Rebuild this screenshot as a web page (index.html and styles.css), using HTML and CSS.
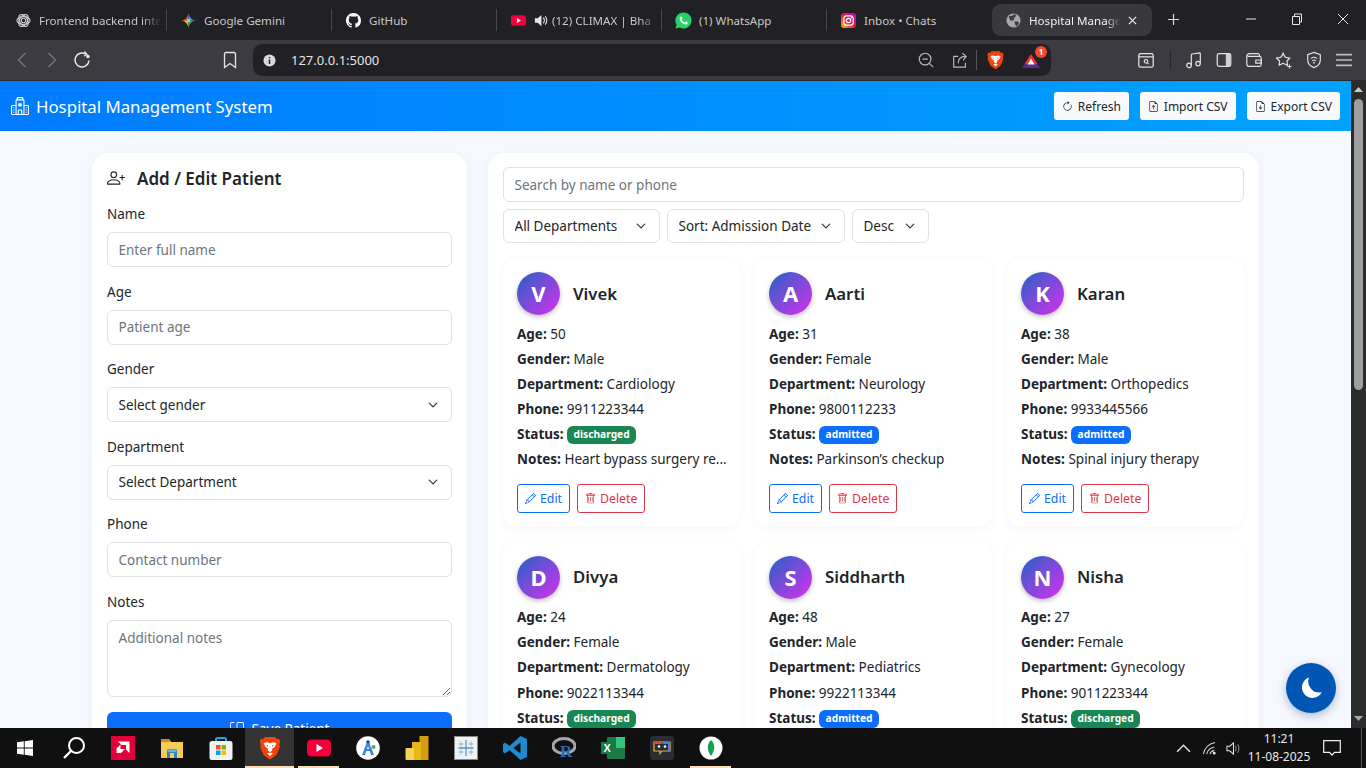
FILE: index.html
```html
<!DOCTYPE html>
<html lang="en">
<head>
<meta charset="utf-8">
<title>Hospital Management System</title>
<link rel="stylesheet" href="styles.css">
</head>
<body>
<svg class="defs" width="0" height="0" aria-hidden="true">
  <symbol id="i-pencil" viewBox="0 0 16 16"><path d="M12.146.146a.5.5 0 0 1 .708 0l3 3a.5.5 0 0 1 0 .708l-10 10a.5.5 0 0 1-.168.11l-5 2a.5.5 0 0 1-.65-.65l2-5a.5.5 0 0 1 .11-.168zM11.207 2.5 13.5 4.793 14.793 3.5 12.5 1.207zm1.586 3L10.5 3.207 4 9.707V10h.5a.5.5 0 0 1 .5.5v.5h.5a.5.5 0 0 1 .5.5v.5h.293zm-9.761 5.175-.106.106-1.528 3.821 3.821-1.528.106-.106A.5.5 0 0 1 5 12.5V12h-.5a.5.5 0 0 1-.5-.5V11h-.5a.5.5 0 0 1-.468-.325"/></symbol>
  <symbol id="i-trash" viewBox="0 0 16 16"><path d="M5.5 5.5A.5.5 0 0 1 6 6v6a.5.5 0 0 1-1 0V6a.5.5 0 0 1 .5-.5m2.5 0a.5.5 0 0 1 .5.5v6a.5.5 0 0 1-1 0V6a.5.5 0 0 1 .5-.5m3 .5a.5.5 0 0 0-1 0v6a.5.5 0 0 0 1 0z"/><path d="M14.5 3a1 1 0 0 1-1 1H13v9a2 2 0 0 1-2 2H5a2 2 0 0 1-2-2V4h-.5a1 1 0 0 1-1-1V2a1 1 0 0 1 1-1H6a1 1 0 0 1 1-1h2a1 1 0 0 1 1 1h3.5a1 1 0 0 1 1 1zM4.118 4 4 4.059V13a1 1 0 0 0 1 1h6a1 1 0 0 0 1-1V4.059L11.882 4zM2.5 3h11V2h-11z"/></symbol>
  <symbol id="i-person-plus" viewBox="0 0 16 16"><path d="M6 8a3 3 0 1 0 0-6 3 3 0 0 0 0 6m2-3a2 2 0 1 1-4 0 2 2 0 0 1 4 0m4 8c0 1-1 1-1 1H1s-1 0-1-1 1-4 6-4 6 3 6 4m-1-.004c-.001-.246-.154-.986-.832-1.664C9.516 10.68 8.289 10 6 10s-3.516.68-4.168 1.332c-.678.678-.83 1.418-.832 1.664z"/><path d="M13.5 5a.5.5 0 0 1 .5.5V7h1.5a.5.5 0 0 1 0 1H14v1.5a.5.5 0 0 1-1 0V8h-1.5a.5.5 0 0 1 0-1H13V5.5a.5.5 0 0 1 .5-.5"/></symbol>
  <symbol id="i-refresh" viewBox="0 0 16 16"><path d="M8 3a5 5 0 1 0 4.546 2.914.5.5 0 0 1 .908-.417A6 6 0 1 1 8 2z"/><path d="M8 4.466V.534a.25.25 0 0 1 .41-.192l2.36 1.966c.12.1.12.284 0 .384L8.41 4.658A.25.25 0 0 1 8 4.466"/></symbol>
  <symbol id="i-file-up" viewBox="0 0 16 16"><path d="M8.5 11.5a.5.5 0 0 1-1 0V7.707L6.354 8.854a.5.5 0 1 1-.708-.708l2-2a.5.5 0 0 1 .708 0l2 2a.5.5 0 0 1-.708.708L8.5 7.707z"/><path d="M14 14V4.5L9.5 0H4a2 2 0 0 0-2 2v12a2 2 0 0 0 2 2h8a2 2 0 0 0 2-2M9.5 3A1.5 1.5 0 0 0 11 4.5h2V14a1 1 0 0 1-1 1H4a1 1 0 0 1-1-1V2a1 1 0 0 1 1-1h5.5z"/></symbol>
  <symbol id="i-file-down" viewBox="0 0 16 16"><path d="M8.5 6.5a.5.5 0 0 0-1 0v3.793L6.354 9.146a.5.5 0 1 0-.708.708l2 2a.5.5 0 0 0 .708 0l2-2a.5.5 0 0 0-.708-.708L8.5 10.293z"/><path d="M14 14V4.5L9.5 0H4a2 2 0 0 0-2 2v12a2 2 0 0 0 2 2h8a2 2 0 0 0 2-2M9.5 3A1.5 1.5 0 0 0 11 4.5h2V14a1 1 0 0 1-1 1H4a1 1 0 0 1-1-1V2a1 1 0 0 1 1-1h5.5z"/></symbol>
  <symbol id="i-hospital" viewBox="0 0 16 16"><path d="M8.5 5.034v1.1l.953-.55.5.867L9 7l.953.55-.5.866-.953-.55v1.1h-1v-1.1l-.953.55-.5-.866L7 7l-.953-.55.5-.866.953.55v-1.1zM13.25 9a.25.25 0 0 0-.25.25v.5c0 .138.112.25.25.25h.5a.25.25 0 0 0 .25-.25v-.5a.25.25 0 0 0-.25-.25zM13 11.25a.25.25 0 0 1 .25-.25h.5a.25.25 0 0 1 .25.25v.5a.25.25 0 0 1-.25.25h-.5a.25.25 0 0 1-.25-.25zm.25 1.75a.25.25 0 0 0-.25.25v.5c0 .138.112.25.25.25h.5a.25.25 0 0 0 .25-.25v-.5a.25.25 0 0 0-.25-.25zm-11-4a.25.25 0 0 0-.25.25v.5c0 .138.112.25.25.25h.5A.25.25 0 0 0 3 9.75v-.5A.25.25 0 0 0 2.75 9zm0 2a.25.25 0 0 0-.25.25v.5c0 .138.112.25.25.25h.5a.25.25 0 0 0 .25-.25v-.5a.25.25 0 0 0-.25-.25zM2 13.25a.25.25 0 0 1 .25-.25h.5a.25.25 0 0 1 .25.25v.5a.25.25 0 0 1-.25.25h-.5a.25.25 0 0 1-.25-.25z"/><path d="M5 1a1 1 0 0 1 1-1h4a1 1 0 0 1 1 1v1a1 1 0 0 1 1 1v4h3a1 1 0 0 1 1 1v7a1 1 0 0 1-1 1H1a1 1 0 0 1-1-1V8a1 1 0 0 1 1-1h3V3a1 1 0 0 1 1-1zm2 14h2v-3H7zm3 0h1V3H5v12h1v-3a1 1 0 0 1 1-1h2a1 1 0 0 1 1 1zm0-14H6v1h4zm2 7v7h3V8zm-8 7V8H1v7z"/></symbol>
  <symbol id="i-save" viewBox="0 0 16 16"><path d="M2 1a1 1 0 0 0-1 1v12a1 1 0 0 0 1 1h12a1 1 0 0 0 1-1V2a1 1 0 0 0-1-1H9.5a1 1 0 0 0-1 1v7.293l2.646-2.647a.5.5 0 0 1 .708.708l-3.5 3.5a.5.5 0 0 1-.708 0l-3.5-3.5a.5.5 0 1 1 .708-.708L7.5 9.293V2a2 2 0 0 1 2-2H14a2 2 0 0 1 2 2v12a2 2 0 0 1-2 2H2a2 2 0 0 1-2-2V2a2 2 0 0 1 2-2h2.5a.5.5 0 0 1 0 1z"/></symbol>
  <symbol id="i-yt" viewBox="0 0 24 24"><rect x="0" y="3.500" width="24" height="17" rx="4.500" fill="#f2003c"/><path d="M9.500 8v8l6.500-4z" fill="#fff"/></symbol>
  <symbol id="i-brave" viewBox="0 0 16 18"><path d="M4.200 .8h7.600l1.400 1.500 1.600-.3.800 2.200-.6 2.300.4 1.500L13 14l-4.200 3.300q-.8.600-1.600 0L3 14 .6 8l.4-1.500L.4 4.200 1.200 2l1.600.3z" fill="#f1440d"/><path d="M3.200 5.300 6 4.700l2 .8 2-.8 2.800.6-1.200 2.800-2 1.400v1.600L8 12l-1.600-1.100V9.300l-2-1.400zM5.800 12.800 8 12.500l2.200.3L8 15.200z" fill="#fff"/><path d="M5 6.600l1.500.4-.4 1zM11 6.600l-1.500.4.400 1z" fill="#f1440d"/></symbol>
</svg>

<div class="tabbar">
  <div class="tab">
    <svg class="tab-ico" viewBox="0 0 16 16"><g fill="none" stroke="#cfcfcf" stroke-width="1.200"><circle cx="8" cy="8" r="2.400"/><ellipse cx="8" cy="8" rx="7" ry="4.200"/><ellipse cx="8" cy="8" rx="7" ry="4.200" transform="rotate(60 8 8)"/><ellipse cx="8" cy="8" rx="7" ry="4.200" transform="rotate(120 8 8)"/></g></svg>
    <span class="tab-title fade">Frontend backend inte</span>
  </div>
  <div class="tab">
    <svg class="tab-ico" viewBox="0 0 16 16"><path d="M8 0C7.400 4.400 4.500 7.400 0 8h8z" fill="#e8453c"/><path d="M8 0c.6 4.400 3.500 7.400 8 8H8z" fill="#4a8df6"/><path d="M0 8c4.500.6 7.400 3.600 8 8V8z" fill="#f5b30a"/><path d="M16 8c-4.500.6-7.400 3.600-8 8V8z" fill="#2fa866"/><circle cx="8" cy="8" r="1.800" fill="#9bc7f5"/></svg>
    <span class="tab-title">Google Gemini</span>
  </div>
  <div class="tab">
    <svg class="tab-ico" viewBox="0 0 16 16"><path fill="#fff" d="M8 0C3.580 0 0 3.580 0 8c0 3.540 2.290 6.530 5.470 7.590.4.070.55-.17.55-.38 0-.19-.01-.82-.01-1.490-2.010.370-2.530-.490-2.690-.940-.090-.230-.480-.940-.820-1.130-.280-.150-.680-.520-.010-.530.630-.010 1.080.580 1.230.820.720 1.210 1.870.870 2.330.660.070-.520.280-.870.510-1.070-1.780-.200-3.640-.890-3.640-3.950 0-.870.310-1.590.820-2.150-.080-.200-.360-1.020.080-2.120 0 0 .670-.210 2.200.820.640-.180 1.320-.270 2-.270s1.360.090 2 .270c1.530-1.040 2.200-.820 2.200-.820.440 1.100.160 1.920.080 2.120.510.560.820 1.270.820 2.150 0 3.070-1.870 3.750-3.650 3.950.290.250.540.730.540 1.480 0 1.070-.010 1.930-.010 2.200 0 .210.150.460.550.380A8.010 8.010 0 0 0 16 8c0-4.420-3.580-8-8-8z"/></svg>
    <span class="tab-title">GitHub</span>
  </div>
  <div class="tab">
    <svg class="tab-ico" viewBox="0 0 24 24"><use href="#i-yt"/></svg>
    <svg class="tab-audio" viewBox="0 0 16 16"><path d="M2 5.500h3L9 2v12L5 10.500H2z" fill="#e6e6e6"/><path d="M11 5c1.300 1.700 1.300 4.300 0 6M13 3.500c2 2.600 2 6.400 0 9" fill="none" stroke="#e6e6e6" stroke-width="1.200"/></svg>
    <span class="tab-title fade">(12) CLIMAX | Bha</span>
  </div>
  <div class="tab">
    <svg class="tab-ico tab-ico-lg" viewBox="0 0 16 16"><path d="M8 .4A7.600 7.600 0 0 0 1.500 12L.4 15.600l3.800-1A7.600 7.600 0 1 0 8 .4z" fill="#25d366"/><path d="M5.400 4.300c-.5.300-1.100 1-1 2 .2 2.500 3 5.200 5.400 5.500 1.100.1 1.900-.5 2.200-1.200l.1-.8-2-1-.8 1C7.900 9.400 6.700 8.100 6.200 7l.8-.9-.8-1.900z" fill="#fff"/></svg>
    <span class="tab-title">(1) WhatsApp</span>
  </div>
  <div class="tab tab-last">
    <svg class="tab-ico" viewBox="0 0 16 16"><defs><linearGradient id="ig" x1="0" y1="1" x2="1" y2="0"><stop offset="0" stop-color="#fdc100"/><stop offset=".5" stop-color="#f0114c"/><stop offset="1" stop-color="#a112cf"/></linearGradient></defs><rect width="16" height="16" rx="3.500" fill="url(#ig)"/><rect x="3" y="3" width="10" height="10" rx="3" fill="none" stroke="#fff" stroke-width="1.300"/><circle cx="8" cy="8" r="2.300" fill="none" stroke="#fff" stroke-width="1.300"/><circle cx="11" cy="5" r=".7" fill="#fff"/></svg>
    <span class="tab-title">Inbox • Chats</span>
  </div>
  <div class="tab tab-active">
    <svg class="tab-ico" viewBox="0 0 16 16"><circle cx="8" cy="8" r="7.500" fill="#a6a7ab"/><path d="M3 3.500 7 3l2-2 2 2-2 2-1 3-3 0-1-1zM9 9l3 0 2 1-2 4-2-1z" fill="#3a3a3f"/></svg>
    <span class="tab-title fade">Hospital Manage</span>
    <svg class="tab-close" viewBox="0 0 10 10"><path d="M1 1l8 8M9 1l-8 8" stroke="#e8e8e8" stroke-width="1.400"/></svg>
  </div>
  <svg class="tab-new" viewBox="0 0 12 12"><path d="M6 0v12M0 6h12" stroke="#dcdcdc" stroke-width="1.300"/></svg>
  <div class="win-ctrls">
    <svg class="win-ctrl" viewBox="0 0 46 12"><path d="M18 6h10" stroke="#e8e8e8"/></svg>
    <svg class="win-ctrl" viewBox="0 0 46 12"><path d="M18.500 3.500h7v8h-7zM20.500 3.500v-2.500h7v8h-2" fill="none" stroke="#e8e8e8"/></svg>
    <svg class="win-ctrl" viewBox="0 0 46 12"><path d="M18 1l10 10M28 1l-10 10" stroke="#e8e8e8"/></svg>
  </div>
</div>

<div class="toolbar">
  <svg class="tb-ico" viewBox="0 0 20 20"><path d="M13.500 3l-7 7 7 7" fill="none" stroke="#77777c" stroke-width="1.300"/></svg>
  <svg class="tb-ico" viewBox="0 0 20 20"><path d="M6.500 3l7 7-7 7" fill="none" stroke="#77777c" stroke-width="1.300"/></svg>
  <svg class="tb-ico" viewBox="0 0 20 20"><path d="M17 10.500a7 7 0 1 1-3-6.300" fill="none" stroke="#ececec" stroke-width="1.500"/><circle cx="16" cy="6.500" r="1.700" fill="#ececec"/><path d="M12.500 1.500l2.500 3-3 1.500" fill="none" stroke="#ececec" stroke-width="1.200"/></svg>
  <svg class="tb-ico tb-bookmark" viewBox="0 0 20 20"><path d="M4.500 4a1.500 1.500 0 0 1 1.500-1.500h8A1.500 1.500 0 0 1 15.500 4v13.500L10 13.500l-5.500 4z" fill="none" stroke="#e6e6e6" stroke-width="1.300"/></svg>
  <div class="omnibox">
    <svg class="omni-info" viewBox="0 0 14 14"><circle cx="7" cy="7" r="6.500" fill="#d8d8d8"/><path d="M7 3.200v1.400M7 6v4.800" stroke="#202025" stroke-width="1.600"/></svg>
    <span class="omni-url">127.0.0.1:5000</span>
    <svg class="omni-ico" viewBox="0 0 20 20"><circle cx="9" cy="9" r="6.500" fill="none" stroke="#b8b8bc" stroke-width="1.300"/><path d="M6 9h6M14 14l4 4" stroke="#b8b8bc" stroke-width="1.300"/></svg>
    <svg class="omni-ico" viewBox="0 0 20 20"><path d="M8 6H3v12h13v-5M8 14c0-5 3-8 8-8M12.500 2.500 17 6l-3.500 4.500" fill="none" stroke="#b8b8bc" stroke-width="1.300"/></svg>
    <span class="omni-sep"></span>
    <svg class="omni-brave" viewBox="0 0 16 18"><use href="#i-brave"/></svg>
    <div class="omni-rewards">
      <svg class="omni-tri" viewBox="0 0 18 14"><path d="M9 0l9 14H0z" fill="#5d2a8e"/><path d="M9 0l6.500 10h-13z" fill="#f1331f"/><path d="M9 4.500l3.500 6h-7z" fill="#fff"/></svg>
      <span class="omni-badge">1</span>
    </div>
  </div>
  <div class="tb-right">
    <svg class="tb-ico" viewBox="0 0 20 20"><rect x="2" y="3" width="16" height="15" rx="2" fill="none" stroke="#e2e2e2" stroke-width="1.400"/><path d="M2 6.500h16" stroke="#e2e2e2" stroke-width="1.400"/><circle cx="10" cy="11.500" r="2" fill="none" stroke="#e2e2e2" stroke-width="1.300"/><path d="M11.500 13l1.500 1.500" stroke="#e2e2e2" stroke-width="1.300"/></svg>
    <span class="tb-sep"></span>
    <svg class="tb-ico" viewBox="0 0 20 20"><circle cx="4.500" cy="16" r="2.500" fill="none" stroke="#e2e2e2" stroke-width="1.300"/><circle cx="14.500" cy="14" r="2.500" fill="none" stroke="#e2e2e2" stroke-width="1.300"/><path d="M7 16V4.500q0-1 1-1.200l8-1.300q1 0 1 1v11" fill="none" stroke="#e2e2e2" stroke-width="1.300"/></svg>
    <svg class="tb-ico" viewBox="0 0 20 20"><rect x="2.500" y="3" width="15" height="14" rx="2" fill="none" stroke="#e2e2e2" stroke-width="1.400"/><path d="M12 3h5.500v14H12z" fill="#d0d0d0"/></svg>
    <svg class="tb-ico" viewBox="0 0 20 20"><path d="M16 6V4.500a1.500 1.500 0 0 0-1.500-1.500H5a3 3 0 0 0-3 3v8.500A2.500 2.500 0 0 0 4.500 17H16a2 2 0 0 0 2-2V8a2 2 0 0 0-2-2H3" fill="none" stroke="#e2e2e2" stroke-width="1.300"/><path d="M12 10h6v3.500h-6z" fill="none" stroke="#e2e2e2" stroke-width="1.300"/></svg>
    <svg class="tb-ico" viewBox="0 0 20 20"><path d="M9 2c.8 3 1.500 4.200 2.800 5l4.700.8-3.200 3.300.6 4.900-4.900-2.500-4.500 2.300.6-4.700L1.500 7.800 6.300 7C7.500 6 8.300 4.800 9 2z" fill="none" stroke="#e2e2e2" stroke-width="1.300" stroke-linejoin="round"/><path d="M16 15v4.500M13.800 17.200h4.500" stroke="#e2e2e2" stroke-width="1.200"/></svg>
    <svg class="tb-ico" viewBox="0 0 20 20"><path d="M10 1.500l7 2.500v6c0 4-3 7-7 8.500C6 17 3 14 3 10V4z" fill="none" stroke="#e2e2e2" stroke-width="1.300"/><path d="M6.500 8.500c2-1.700 5-1.700 7 0M8 10.800c1.200-1 2.800-1 4 0" fill="none" stroke="#e2e2e2" stroke-width="1.200"/><circle cx="10" cy="13" r="1" fill="#e2e2e2"/></svg>
    <svg class="tb-ico" viewBox="0 0 20 20"><path d="M1 4h18M1 10h18M1 16h18" stroke="#bdbdbd" stroke-width="1.800"/></svg>
  </div>
</div>

<div class="window">
  <div class="page">
    <header class="app-header">
      <div class="brand">
        <svg class="brand-ico" viewBox="0 0 16 16"><use href="#i-hospital"/></svg>
        <span>Hospital Management System</span>
      </div>
      <div class="header-actions">
        <button class="hbtn"><svg class="ico" viewBox="0 0 16 16"><use href="#i-refresh"/></svg>Refresh</button>
        <button class="hbtn"><svg class="ico" viewBox="0 0 16 16"><use href="#i-file-up"/></svg>Import CSV</button>
        <button class="hbtn"><svg class="ico" viewBox="0 0 16 16"><use href="#i-file-down"/></svg>Export CSV</button>
      </div>
    </header>
    <main class="content">
      <section class="panel form-panel">
        <h2 class="panel-title"><svg class="title-ico" viewBox="0 0 16 16"><use href="#i-person-plus"/></svg>Add / Edit Patient</h2>
        <label class="field-label">Name</label>
        <input class="control" placeholder="Enter full name">
        <label class="field-label">Age</label>
        <input class="control" placeholder="Patient age">
        <label class="field-label">Gender</label>
        <select class="control select"><option>Select gender</option></select>
        <label class="field-label">Department</label>
        <select class="control select"><option>Select Department</option></select>
        <label class="field-label">Phone</label>
        <input class="control" placeholder="Contact number">
        <label class="field-label">Notes</label>
        <textarea class="control notes" placeholder="Additional notes"></textarea>
        <button class="save-btn"><svg class="ico" viewBox="0 0 16 16"><use href="#i-save"/></svg>Save Patient</button>
      </section>
      <section class="panel list-panel">
        <input class="control search" placeholder="Search by name or phone">
        <div class="filters">
          <select class="control select filter f-dept"><option>All Departments</option></select>
          <select class="control select filter f-sort"><option>Sort: Admission Date</option></select>
          <select class="control select filter f-dir"><option>Desc</option></select>
        </div>
        <div class="cards">
          <article class="card">
            <div class="card-head"><span class="avatar">V</span><span class="pname">Vivek</span></div>
            <p class="row"><b>Age:</b> 50</p>
            <p class="row"><b>Gender:</b> Male</p>
            <p class="row"><b>Department:</b> Cardiology</p>
            <p class="row"><b>Phone:</b> 9911223344</p>
            <p class="row"><b>Status:</b> <span class="badge done">discharged</span></p>
            <p class="row"><b>Notes:</b> Heart bypass surgery re...</p>
            <div class="actions"><button class="sbtn edit"><svg class="ico" viewBox="0 0 16 16"><use href="#i-pencil"/></svg>Edit</button><button class="sbtn del"><svg class="ico" viewBox="0 0 16 16"><use href="#i-trash"/></svg>Delete</button></div>
          </article>
          <article class="card">
            <div class="card-head"><span class="avatar">A</span><span class="pname">Aarti</span></div>
            <p class="row"><b>Age:</b> 31</p>
            <p class="row"><b>Gender:</b> Female</p>
            <p class="row"><b>Department:</b> Neurology</p>
            <p class="row"><b>Phone:</b> 9800112233</p>
            <p class="row"><b>Status:</b> <span class="badge adm">admitted</span></p>
            <p class="row"><b>Notes:</b> Parkinson’s checkup</p>
            <div class="actions"><button class="sbtn edit"><svg class="ico" viewBox="0 0 16 16"><use href="#i-pencil"/></svg>Edit</button><button class="sbtn del"><svg class="ico" viewBox="0 0 16 16"><use href="#i-trash"/></svg>Delete</button></div>
          </article>
          <article class="card">
            <div class="card-head"><span class="avatar">K</span><span class="pname">Karan</span></div>
            <p class="row"><b>Age:</b> 38</p>
            <p class="row"><b>Gender:</b> Male</p>
            <p class="row"><b>Department:</b> Orthopedics</p>
            <p class="row"><b>Phone:</b> 9933445566</p>
            <p class="row"><b>Status:</b> <span class="badge adm">admitted</span></p>
            <p class="row"><b>Notes:</b> Spinal injury therapy</p>
            <div class="actions"><button class="sbtn edit"><svg class="ico" viewBox="0 0 16 16"><use href="#i-pencil"/></svg>Edit</button><button class="sbtn del"><svg class="ico" viewBox="0 0 16 16"><use href="#i-trash"/></svg>Delete</button></div>
          </article>
          <article class="card">
            <div class="card-head"><span class="avatar">D</span><span class="pname">Divya</span></div>
            <p class="row"><b>Age:</b> 24</p>
            <p class="row"><b>Gender:</b> Female</p>
            <p class="row"><b>Department:</b> Dermatology</p>
            <p class="row"><b>Phone:</b> 9022113344</p>
            <p class="row"><b>Status:</b> <span class="badge done">discharged</span></p>
          </article>
          <article class="card">
            <div class="card-head"><span class="avatar">S</span><span class="pname">Siddharth</span></div>
            <p class="row"><b>Age:</b> 48</p>
            <p class="row"><b>Gender:</b> Male</p>
            <p class="row"><b>Department:</b> Pediatrics</p>
            <p class="row"><b>Phone:</b> 9922113344</p>
            <p class="row"><b>Status:</b> <span class="badge adm">admitted</span></p>
          </article>
          <article class="card">
            <div class="card-head"><span class="avatar">N</span><span class="pname">Nisha</span></div>
            <p class="row"><b>Age:</b> 27</p>
            <p class="row"><b>Gender:</b> Female</p>
            <p class="row"><b>Department:</b> Gynecology</p>
            <p class="row"><b>Phone:</b> 9011223344</p>
            <p class="row"><b>Status:</b> <span class="badge done">discharged</span></p>
          </article>
        </div>
      </section>
    </main>
    <button class="fab" aria-label="Toggle theme"><svg viewBox="0 0 24 24"><path d="M10 1.500a10.500 10.500 0 1 0 12.800 14.700A11 11 0 0 1 10 1.500z" fill="#fff"/></svg></button>
  </div>
  <div class="scrollbar">
    <svg class="sb-arrow" viewBox="0 0 15 15"><path d="M3 10l4.500-5 4.500 5z" fill="#c8c8c8"/></svg>
    <div class="sb-thumb"></div>
    <svg class="sb-arrow sb-down" viewBox="0 0 15 15"><path d="M3 5l4.500 5 4.500-5z" fill="#a8a8a8"/></svg>
  </div>
</div>

<footer class="taskbar">
  <div class="task"><svg class="t-win" viewBox="0 0 16 16"><path d="M0 2.300 6.800 1.300v6.200H0zM7.700 1.200 16 0v7.500H7.700zM0 8.500h6.800v6.200L0 13.700zM7.700 8.500H16V16l-8.300-1.200z" fill="#fff"/></svg></div>
  <div class="task"><svg class="t-lg" viewBox="0 0 24 24"><circle cx="14.500" cy="9.500" r="7.500" fill="none" stroke="#fff" stroke-width="2"/><path d="M9 15l-7 7" stroke="#fff" stroke-width="2.400"/></svg></div>
  <div class="task"><svg class="t-lg" viewBox="0 0 24 24"><rect width="24" height="24" fill="#e4003a"/><path d="M7 5.500h11.500V17L15 13.500V9h-4.500z" fill="#fff"/><path d="M5.500 12.500 9.500 8.500V13H14l-4 4H5.500z" fill="#fff"/></svg></div>
  <div class="task"><svg class="t-lg" viewBox="0 0 24 24"><path d="M1 3h8l2 3h12v16H1z" fill="#f5cc55"/><path d="M1 3h8l2 3H1z" fill="#c98f1d"/><path d="M7 15a2 2 0 0 1 2-2h6a2 2 0 0 1 2 2v7h-3v-5h-4v5H7z" fill="#2f86c9"/><path d="M8 13.500h8v2.500H8z" fill="#63b8e8"/></svg></div>
  <div class="task"><svg class="t-lg" viewBox="0 0 24 24"><path d="M7 6V3.500A1.500 1.500 0 0 1 8.500 2h7A1.500 1.500 0 0 1 17 3.500V6" fill="none" stroke="#1ba8dc" stroke-width="2"/><rect y="5" x=".5" width="23" height="19" rx="2.500" fill="#f2f2f2"/><path d="M7 9h4.500v4.500H7z" fill="#f25022"/><path d="M12.500 9H17v4.500h-4.500z" fill="#7fba00"/><path d="M7 14.500h4.500V19H7z" fill="#00a4ef"/><path d="M12.500 14.500H17V19h-4.500z" fill="#ffb900"/></svg></div>
  <div class="task task-on active"><svg class="t-lg" viewBox="0 0 16 18"><use href="#i-brave"/></svg></div>
  <div class="task task-on"><svg class="t-lg" viewBox="0 0 24 24"><use href="#i-yt"/></svg></div>
  <div class="task"><svg class="t-lg" viewBox="0 0 24 24"><circle cx="12" cy="12" r="11.800" fill="#fff"/><path d="M12 3.500 18 19h-3l-3-9-3 9H6z" fill="#3f82e8"/><path d="M8 13h8v2H8z" fill="#3f82e8"/><circle cx="12" cy="6" r="1.800" fill="#2a4a80"/><circle cx="17.500" cy="11" r="2" fill="#4caf50"/></svg></div>
  <div class="task"><svg class="t-lg" viewBox="0 0 24 24"><rect x="14.500" y="0" width="9" height="24" fill="#d69c10"/><rect x="7" y="6" width="9" height="18" fill="#eab719"/><rect x="0.500" y="12" width="8.500" height="12" rx="1" fill="#f4d454"/></svg></div>
  <div class="task"><svg class="t-lg" viewBox="0 0 24 24"><rect x=".5" y=".5" width="23" height="23" fill="#eef2f4" stroke="#8a8a8a"/><path d="M12 4v16M4.500 12h15" stroke="#5f95c0" stroke-width="1.300"/><path d="M7 5.500v5M4.500 8h5M17 5.500v5M14.500 8h5M7 13.500v5M4.500 16h5M17 13.500v5M14.500 16h5" stroke="#8bb4d0" stroke-width="1"/></svg></div>
  <div class="task"><svg class="t-lg" viewBox="0 0 24 24"><path d="M17.500 0 24 3v18l-6.500 3L6.500 14 2 17.500 0 16V8l2-1.500L6.500 10z" fill="#1f8ad2"/><path d="M17.500 6.500 10.500 12l7 5.500z" fill="#101010"/></svg></div>
  <div class="task"><svg class="t-lg" viewBox="0 0 24 24"><ellipse cx="12" cy="10" rx="11" ry="7.500" fill="none" stroke="#a4a8ae" stroke-width="3"/><text class="r-mark" x="8" y="21">R</text></svg></div>
  <div class="task"><svg class="t-lg" viewBox="0 0 24 24"><rect x="6" y="1" width="18" height="22" rx="1" fill="#1e7a45"/><rect x="15" y="1" width="9" height="11" fill="#33c481"/><rect x="0" y="6" width="12" height="12" fill="#107c41"/><text class="x-mark" x="2.500" y="16">X</text></svg></div>
  <div class="task"><svg class="t-lg" viewBox="0 0 24 24"><rect width="24" height="24" rx="3" fill="#2a2d34"/><path d="M4 6h16v9h-8l-2 2.500V15H4z" fill="none" stroke="#e8b23a" stroke-width="1.200"/><path d="M4 6h8v2H4z" fill="#d64933"/><path d="M13 6h7v9h-2V8h-5z" fill="#3f82e8"/><circle cx="9" cy="10.500" r="1.300" fill="#fff"/><circle cx="15" cy="10.500" r="1.300" fill="#fff"/></svg></div>
  <div class="task task-on"><svg class="t-lg" viewBox="0 0 24 24"><circle cx="12" cy="12" r="11.500" fill="#fff"/><path d="M12 4c4 3.500 4.500 10 0 16-4.500-6-4-12.500 0-16z" fill="#13a04f"/></svg></div>
  <div class="tray">
    <svg class="tray-ico tray-up" viewBox="0 0 14 14"><path d="M1 10l6-6 6 6" fill="none" stroke="#e4e4e4" stroke-width="1.300"/></svg>
    <svg class="tray-ico" viewBox="0 0 16 16"><path d="M1.500 14C2.500 8 7 3 14 1.500M5 14c.8-3.500 3.500-6.500 8-7.500M8.500 14c.5-2 2-3.500 4.500-4" fill="none" stroke="#d0d0d0" stroke-width="1.100"/><circle cx="13" cy="13" r="1.500" fill="#e8e8e8"/></svg>
    <svg class="tray-ico tray-vol" viewBox="0 0 16 16"><path d="M1 5.500h3L8 2v12L4 10.500H1z" fill="none" stroke="#e4e4e4" stroke-width="1.100"/><path d="M10 5c1 1.700 1 4.300 0 6M12.500 3.500c1.700 2.600 1.700 6.400 0 9" fill="none" stroke="#a0a0a0" stroke-width="1"/></svg>
    <div class="clock"><span>11:21</span><span>11-08-2025</span></div>
    <svg class="tray-note" viewBox="0 0 18 16"><path d="M.7.700h16.600v11.600H11.500L9 15l-2.500-2.700H.7z" fill="none" stroke="#f0f0f0" stroke-width="1.200"/></svg>
    <span class="show-desktop"></span>
  </div>
</footer>
</body>
</html>
```
FILE: styles.css
```css
* { box-sizing: border-box; }
html, body { height: 100%; }
body {
  margin: 0;
  width: 1366px;
  height: 768px;
  overflow: hidden;
  display: flex;
  flex-direction: column;
  font-family: "Noto Sans", "Open Sans", sans-serif;
  color: #212529;
  background: #f6f8ff;
}
.defs { position: absolute; }
button, input, select, textarea { font-family: inherit; }

/* browser tabs */
.tabbar {
  height: 40px;
  flex: none;
  display: flex;
  align-items: flex-start;
  padding: 4px 0 0 2px;
  background: #202025;
  color: #c8c8cc;
  font-size: 11.600px;
}
.tab {
  width: 165px;
  height: 32px;
  display: flex;
  align-items: center;
  padding: 0 6px 0 14px;
  position: relative;
}
.tab::after {
  content: "";
  position: absolute;
  right: 0;
  top: 5px;
  bottom: 5px;
  width: 1px;
  background: #47474c;
}
.tab-last::after, .tab-active::after { display: none; }
.tab-ico { width: 15px; height: 15px; flex: none; margin-right: 8px; }
.tab-ico-lg { width: 17px; height: 17px; margin-right: 7px; margin-left: -1px; }
.tab-audio { width: 15px; height: 15px; flex: none; margin: 0 4px 0 -1px; }
.tab-title { white-space: nowrap; }
.fade {
  flex: 1;
  min-width: 0;
  -webkit-mask-image: linear-gradient(90deg, #000 85%, transparent);
  mask-image: linear-gradient(90deg, #000 85%, transparent);
}
.tab-active {
  width: 160px;
  background: #38383d;
  border-radius: 9px;
  color: #f1f1f1;
}
.tab-close { width: 9px; height: 9px; flex: none; margin: 0 9px 0 8px; }
.tab-new { width: 11px; height: 11px; flex: none; margin: 10px 0 0 16px; }
.win-ctrls { margin-left: auto; display: flex; }
.win-ctrl { width: 46px; height: 12px; margin-top: 9px; }

/* browser toolbar */
.toolbar {
  height: 41px;
  flex: none;
  display: flex;
  align-items: center;
  padding: 0 7px;
  background: #3b3b41;
  border-bottom: 1px solid #2b2b30;
}
.tb-ico { width: 20px; height: 20px; flex: none; margin: 0 5px; }
.tb-bookmark { margin-left: 123px; }
.omnibox {
  width: 798px;
  height: 32px;
  flex: none;
  margin-left: 8px;
  display: flex;
  align-items: center;
  padding: 0 10px;
  background: #202025;
  border-radius: 9px;
}
.omni-info { width: 13px; height: 13px; margin-right: 15px; }
.omni-url { flex: 1; color: #e4e4e6; font-size: 13px; }
.omni-ico { width: 18px; height: 18px; margin-left: 16px; }
.omni-sep { width: 1px; height: 20px; margin: 0 10px 0 7px; background: #55555a; }
.omni-brave { width: 17px; height: 20px; }
.omni-rewards { position: relative; width: 18px; margin: 2px 1px 0 18px; display: flex; }
.omni-tri { width: 18px; height: 14px; }
.omni-badge {
  position: absolute;
  top: -8px;
  right: -7px;
  width: 12px;
  height: 12px;
  border-radius: 50%;
  background: #f0492c;
  color: #fff;
  font-size: 8px;
  font-weight: 700;
  line-height: 12px;
  text-align: center;
}
.tb-right { display: flex; align-items: center; margin-left: 80px; }
.tb-right .tb-ico { width: 18px; height: 18px; margin: 0 6px; }
.tb-sep { width: 1px; height: 20px; margin: 0 8px 0 9px; background: #26262a; }

/* page */
.window { flex: 1; min-height: 0; display: flex; overflow: hidden; }
.page { flex: 1; min-width: 0; position: relative; overflow: hidden; background: #f6f8ff; }
.scrollbar {
  width: 15px;
  flex: none;
  display: flex;
  flex-direction: column;
  align-items: center;
  background: #2c2c2c;
}
.sb-arrow { width: 15px; height: 15px; flex: none; margin-top: 1px; }
.sb-thumb { width: 9px; height: 291px; margin-top: 2px; border-radius: 5px; background: #9f9f9f; }
.sb-down { margin-top: auto; margin-bottom: 2px; }

.app-header {
  height: 50px;
  display: flex;
  align-items: center;
  justify-content: space-between;
  padding: 0 11px;
  background: linear-gradient(90deg, #007bff, #00a2ff);
}
.brand { display: flex; align-items: center; gap: 7px; color: #fff; font-size: 16.800px; }
.brand-ico { width: 18px; height: 18px; fill: #fff; }
.header-actions { display: flex; gap: 11px; }
.hbtn {
  height: 28px;
  display: flex;
  align-items: center;
  gap: 5px;
  padding: 0 8px;
  border: 0;
  border-radius: 3px;
  background: #f8f9fa;
  color: #212529;
  font-size: 12px;
}
.ico { width: 11px; height: 11px; fill: currentColor; flex: none; }

.content { display: flex; gap: 21px; align-items: flex-start; padding: 22px 92px 0; }
.panel { background: #fff; border-radius: 16px; box-shadow: 0 2px 10px rgba(60, 70, 120, .04); padding: 14px 15px; }
.form-panel { width: 375px; flex: none; display: flex; flex-direction: column; }
.list-panel { width: 771px; flex: none; }
.panel-title {
  margin: 0 0 15px;
  display: flex;
  align-items: center;
  height: 22px;
  font-size: 17px;
  font-weight: 600;
}
.title-ico { width: 18px; height: 18px; margin-right: 12px; fill: #212529; }
.field-label { font-size: 13.500px; line-height: 20px; margin-bottom: 8px; }
.control {
  width: 100%;
  height: 35px;
  padding: 0 10.500px;
  border: 1px solid #dee2e6;
  border-radius: 6px;
  background: #fff;
  color: #212529;
  font-size: 13.500px;
  margin-bottom: 14.600px;
  outline: none;
}
.control::placeholder { color: #6c757d; opacity: 1; }
.select {
  appearance: none;
  padding-right: 36px;
  background-image: url("data:image/svg+xml,%3csvg xmlns='http://www.w3.org/2000/svg' viewBox='0 0 16 16'%3e%3cpath fill='none' stroke='%23343a40' stroke-linecap='round' stroke-linejoin='round' stroke-width='2' d='m2 5 6 6 6-6'/%3e%3c/svg%3e");
  background-repeat: no-repeat;
  background-position: right 12px center;
  background-size: 12px 10px;
}
.notes { height: 77px; padding-top: 8px; resize: vertical; margin-bottom: 15px; }
.save-btn {
  height: 35px;
  flex: none;
  display: flex;
  align-items: center;
  justify-content: center;
  gap: 8px;
  border: 0;
  border-radius: 6px;
  background: #0d6efd;
  color: #fff;
  font-size: 13.500px;
}
.save-btn .ico { width: 14px; height: 14px; }
.search { display: block; margin-bottom: 7px; }
.filters { display: flex; gap: 7px; margin-bottom: 15px; }
.filter { margin: 0; width: auto; height: 34px; padding-right: 22px; }
.f-dept { width: 157px; }
.f-sort { width: 178px; }
.f-dir { width: 77px; }
.cards { display: grid; grid-template-columns: repeat(3, 237px); gap: 14.500px 15px; }
.card {
  height: 269px;
  padding: 14px;
  background: #fff;
  border-radius: 14px;
  box-shadow: 0 2px 8px rgba(60, 70, 120, .05);
  font-size: 13.500px;
}
.card-head { display: flex; align-items: center; gap: 13px; margin-bottom: 6.500px; }
.avatar {
  width: 43px;
  height: 43px;
  padding-bottom: 1px;
  border-radius: 50%;
  display: flex;
  align-items: center;
  justify-content: center;
  background: linear-gradient(135deg, #2563c4, #d92ff0);
  box-shadow: 0 2px 5px rgba(0, 0, 0, .25);
  color: #fff;
  font-size: 22px;
  font-weight: 700;
}
.pname { font-size: 16.800px; font-weight: 600; padding-bottom: 1px; }
.row { margin: 0; height: 25.200px; line-height: 25px; white-space: nowrap; }
.row b { font-weight: 700; }
.badge {
  display: inline-block;
  height: 18px;
  line-height: 17px;
  padding: 0 6.500px;
  border-radius: 6px;
  color: #fff;
  font-size: 10.200px;
  font-weight: 700;
  vertical-align: 1px;
}
.done { background: #198754; }
.adm { background: #0d6efd; }
.actions { display: flex; gap: 7px; margin-top: 11px; }
.sbtn {
  height: 29px;
  display: flex;
  align-items: center;
  gap: 4px;
  padding: 0 7px;
  border: 1px solid;
  border-radius: 3px;
  background: #fff;
  font-size: 12.300px;
}
.edit { color: #0d6efd; }
.del { color: #dc3545; }
.fab {
  position: absolute;
  right: 15px;
  bottom: 15px;
  width: 50px;
  height: 50px;
  border: 0;
  border-radius: 50%;
  padding: 13px;
  display: flex;
  background: #0057b3;
  box-shadow: 0 3px 10px rgba(0, 40, 100, .3);
}
.fab svg { width: 24px; height: 24px; }

/* taskbar */
.taskbar {
  height: 40px;
  flex: none;
  display: flex;
  align-items: stretch;
  background: #101010;
}
.task { width: 49px; flex: none; display: flex; align-items: center; justify-content: center; position: relative; }
.t-win { width: 16px; height: 16px; }
.t-lg { width: 24px; height: 24px; }
.task-on::after {
  content: "";
  position: absolute;
  left: 4px;
  right: 4px;
  bottom: 0;
  height: 2px;
  background: #ffdcb8;
}
.active { background: #333; }
.active::after { left: 0; right: 0; }
.r-mark { font: 700 17px "Liberation Serif", serif; fill: #2869b8; }
.x-mark { font: 700 11px "Liberation Sans", sans-serif; fill: #fff; }
.tray { margin-left: auto; display: flex; align-items: center; color: #e8e8e8; font-size: 12px; }
.tray-ico { width: 15px; height: 15px; margin-right: 9px; }
.tray-up { margin-right: 11px; }
.tray-vol { margin-right: 5px; }
.clock { width: 64px; margin: 0 12px 0 1px; display: flex; flex-direction: column; align-items: center; line-height: 18px; }
.tray-note { width: 18px; height: 16px; margin-right: 20px; }
.show-desktop { width: 1px; height: 40px; margin-right: 4px; background: #555; }
```
